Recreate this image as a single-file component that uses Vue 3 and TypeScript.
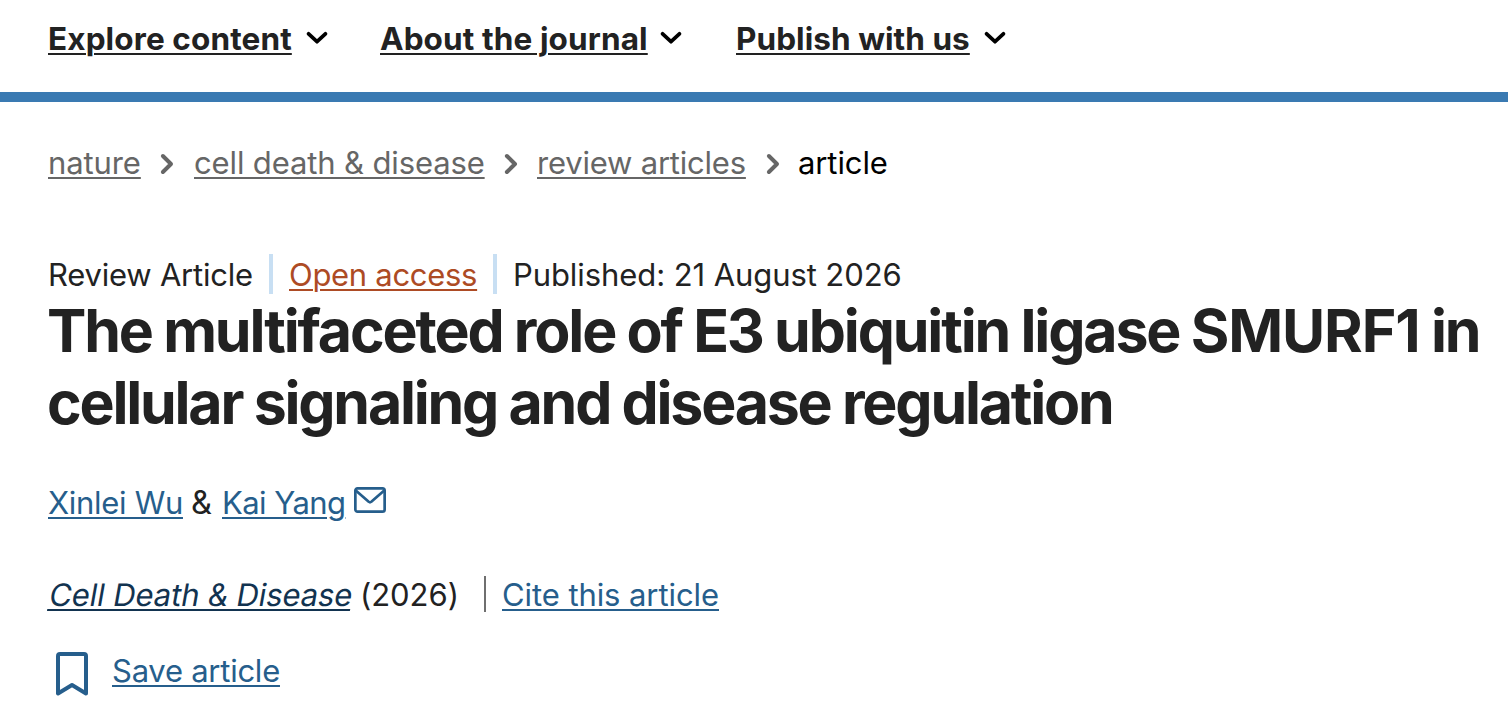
<script setup lang="ts">
interface Item { label: string; cls: string }
const menu: Item[] = [
  { label: 'Explore content', cls: 'explore' },
  { label: 'About the journal', cls: 'about' },
  { label: 'Publish with us', cls: 'publish' },
]
const crumbs: Item[] = [
  { label: 'nature', cls: 'nature' },
  { label: 'cell death & disease', cls: 'cell' },
  { label: 'review articles', cls: 'review' },
]
</script>

<template>
  <div class="page">
    <nav class="menu">
      <a v-for="m in menu" :key="m.label" class="menu-item" :class="m.cls">
        <span class="menu-label">{{ m.label }}</span>
        <svg width="22" height="14" viewBox="0 0 22 14"><path d="M2.600 2.800 11 10.700l8.400-7.900" fill="none" stroke="#000" stroke-width="3.700" stroke-linecap="round" stroke-linejoin="round" /></svg>
      </a>
    </nav>
    <nav class="crumbs">
      <div v-for="c in crumbs" :key="c.label" class="crumb" :class="c.cls">
        <a>{{ c.label }}</a>
        <svg width="14" height="22" viewBox="0 0 14 22"><path d="M2.900 3 11 11l-8.100 8" fill="none" stroke="#666" stroke-width="4" stroke-linecap="round" stroke-linejoin="round" /></svg>
      </div>
      <span class="here">article</span>
    </nav>
    <main>
      <div class="meta">
        <span class="type">Review Article</span>
        <span class="access"><a>Open access</a></span>
        <span class="date">Published: 21 August 2026</span>
      </div>
      <h1><span class="line-one">The multifaceted role of E3 ubiquitin ligase <span class="gene">SMURF1</span> in</span><br><span class="line-two">cellular signaling and disease regulation</span></h1>
      <div class="authors">
        <span class="first"><a>Xinlei Wu</a></span><span class="amp">&amp;</span><span class="second"><a>Kai Yang</a></span>
        <svg width="32" height="26" viewBox="0 0 32 26" fill="none" stroke="#265e8c" stroke-width="2.700" stroke-linejoin="round"><rect x="1.350" y="1.350" width="29.300" height="23.300" rx="2.200" /><path d="M1.800 3.500 14.700 14.800q1.300 1 2.600 0L30.200 3.500" /></svg>
      </div>
      <div class="journal">
        <span class="name"><a>Cell Death &amp; Disease</a></span><span class="year">(2026)</span><span class="cite"><a>Cite this article</a></span>
      </div>
      <div class="save">
        <svg width="32" height="44" viewBox="0 0 32 44"><path d="M4 2h24q2 0 2 2v37.500L16 33 2 41.500V4q0-2 2-2z" fill="none" stroke="#265e8c" stroke-width="4" stroke-linejoin="round" /></svg>
        <a>Save article</a>
      </div>
    </main>
  </div>
</template>

<style>
body { background: #fff; }
</style>
<style scoped>
.page { height: 715px; overflow: hidden; font-family: Inter, "Liberation Sans", sans-serif; font-size: 31px; line-height: 40px; color: #222; white-space: nowrap; }
svg { display: block; flex: none; }
a, .menu-label { text-decoration: underline; text-decoration-thickness: 2px; text-underline-offset: 3px; }
.menu { height: 92px; box-sizing: border-box; padding: 19px 0 0 48px; display: flex; }
.menu-item { display: flex; justify-content: space-between; text-decoration: none; font-size: 31.5px; font-weight: 700; letter-spacing: 0.12px; }
.menu-item svg { margin-top: 12px; }
.explore { width: 280px; margin-right: 52px; }
.about { width: 302px; margin-right: 54px; }
.publish { width: 270px; letter-spacing: 0.06px; }
.crumbs { border-top: 10px solid #3a7ab2; height: 152px; box-sizing: border-box; padding: 41px 0 0 48px; display: flex; color: #666; letter-spacing: -0.1px; }
.crumb { display: flex; justify-content: space-between; }
.crumb svg { margin-top: 10px; }
.nature { width: 126px; margin-right: 20px; }
.cell { width: 324px; margin-right: 19px; letter-spacing: -0.13px; }
.review { width: 243px; margin-right: 18px; letter-spacing: -0.21px; }
.here { color: #000; }
main { padding: 10px 0 0 48px; }
.meta { display: flex; height: 41px; }
.type { width: 221px; letter-spacing: -0.22px; padding-top: 1px; box-sizing: border-box; }
.access { height: 40px; width: 228px; box-sizing: border-box; padding: 1px 0 0 16px; border-left: 4px solid #c8dff3; border-right: 4px solid #c8dff3; color: #ad4b24; letter-spacing: -0.3px; }
.date { padding: 1px 0 0 16px; letter-spacing: -0.08px; }
h1 { margin: 0 0 0 -1px; font-size: 59px; line-height: 72px; font-weight: 700; }
.line-one { letter-spacing: -2.12px; word-spacing: -0.6px; }
.gene { letter-spacing: -1.1px; }
.line-two { letter-spacing: -2.2px; word-spacing: -0.35px; }
.authors { display: flex; margin-top: 44px; color: #265e8c; }
.first { width: 143px; letter-spacing: -0.3px; }
.amp { width: 31px; color: #222; font-size: 32.5px; }
.second { width: 132px; letter-spacing: -0.58px; }
.authors svg { margin-top: 4px; }
.journal { display: flex; margin-top: 52px; }
.name { width: 312px; color: #123350; letter-spacing: -0.1px; }
.name a { display: inline-block; transform: skewX(-10deg); transform-origin: 50% 75%; }
.year { width: 124px; letter-spacing: -0.05px; }
.cite { height: 36px; line-height: 38px; color: #265e8c; padding-left: 16px; border-left: 2px solid #6f6f6f; margin-top: 1px; letter-spacing: -0.08px; }
.save { display: flex; margin-top: 36px; padding-left: 8px; gap: 24px; color: #265e8c; letter-spacing: -0.25px; }
.save svg { margin-top: 1px; }
</style>
